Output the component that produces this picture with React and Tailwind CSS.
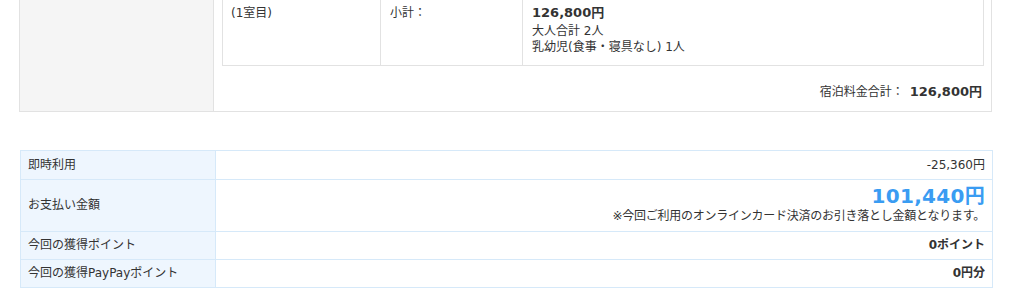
import React from 'react';

const font = { fontFamily: '"DejaVu Sans", "Noto Sans CJK JP", sans-serif' };

const PaymentRow = ({ label, children, className = '' }) => (
    <div className={`flex border-t border-[#d6e9f9] first:border-t-0 ${className}`}>
        <div className="w-[195px] shrink-0 bg-[#eef6fe] border-r border-[#d6e9f9] px-[7px] flex items-center">
            {label}
        </div>
        <div className="flex-1 px-[7px] flex flex-col justify-center items-end">{children}</div>
    </div>
);

export default function App() {
    return (
        <div className="w-[1024px] h-[289px] overflow-hidden bg-white text-[12px] text-[#333]" style={font}>
            {/* stay plan summary */}
            <div className="ml-[19px] -mt-[17px] w-[973px] flex border border-[#e2e2e2]">
                <div className="w-[194px] shrink-0 bg-[#f5f5f5] border-r border-[#e2e2e2]" />
                <div className="flex-1 pt-[8px] pl-[8px] pr-[7px]">
                    <div className="flex border border-[#e2e2e2]">
                        <div className="w-[158px] shrink-0 border-r border-[#e2e2e2] pl-[8px] pt-[11px]">(1室目)</div>
                        <div className="w-[142px] shrink-0 border-r border-[#e2e2e2] pl-[9px] pt-[11px]">小計：</div>
                        <div className="flex-1 pl-[9px] pt-[10px] pb-[10px] leading-[16px]">
                            <div className="text-[13px] font-bold leading-[20px]">126,800円</div>
                            <div>大人合計 2人</div>
                            <div>乳幼児(食事・寝具なし) 1人</div>
                        </div>
                    </div>
                    <div className="flex justify-end items-center pt-[16px] pb-[9px] pr-[2px]">
                        <span>宿泊料金合計：</span>
                        <span className="ml-[6px] text-[13px] font-bold">126,800円</span>
                    </div>
                </div>
            </div>

            {/* payment */}
            <div className="ml-[20px] mt-[38px] w-[973px] border border-[#d6e9f9]">
                <PaymentRow label="即時利用" className="h-[28px]">
                    <span>-25,360円</span>
                </PaymentRow>
                <PaymentRow label="お支払い金額" className="h-[52px]">
                    <span className="text-[20px] font-bold text-[#3a9cf2] leading-[24px] -mt-[2px] tracking-[0.3px]">101,440円</span>
                    <span className="leading-[16px] tracking-[-0.25px]">※今回ご利用のオンラインカード決済のお引き落とし金額となります。</span>
                </PaymentRow>
                <PaymentRow label="今回の獲得ポイント" className="h-[28px]">
                    <span className="font-bold">0ポイント</span>
                </PaymentRow>
                <PaymentRow label="今回の獲得PayPayポイント" className="h-[28px]">
                    <span className="font-bold">0円分</span>
                </PaymentRow>
            </div>
        </div>
    );
}
